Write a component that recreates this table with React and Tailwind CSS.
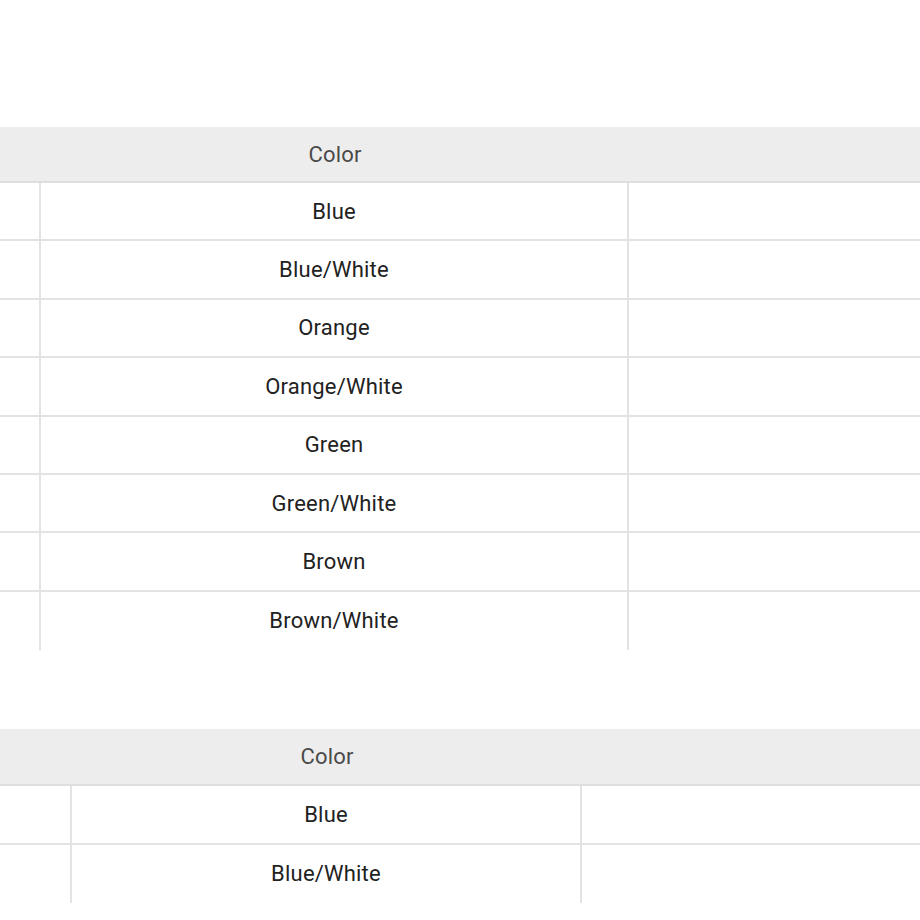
import React from 'react';

const tables = [
  {
    cols: 'grid-cols-[41px_588px_1fr]',
    rowH: 'h-[58.4px]',
    headH: 'h-[56px]',
    colors: ['Blue', 'Blue/White', 'Orange', 'Orange/White', 'Green', 'Green/White', 'Brown', 'Brown/White'],
  },
  {
    cols: 'grid-cols-[72px_510px_1fr]',
    rowH: 'h-[58.5px]',
    headH: 'h-[57px]',
    colors: ['Blue', 'Blue/White'],
  },
];

function ColorTable({ cols, rowH, headH, colors }) {
  return (
    <div className="w-full">
      <div className={`grid ${cols} ${headH} bg-[#ededed] border-b-2 border-[#dedede]`}>
        <div />
        <div className="flex items-center justify-center text-[22px] tracking-[0.2px] text-[#4a4a4a]">Color</div>
        <div />
      </div>
      {colors.map((c, i) => (
        <div
          key={c}
          className={`grid ${cols} ${rowH} ${i < colors.length - 1 ? 'border-b-2 border-[#e3e3e3]' : ''}`}
        >
          <div className="border-r-2 border-[#e3e3e3]" />
          <div className="flex items-center justify-center border-r-2 border-[#e3e3e3] text-[22px] tracking-[0.2px] text-[#222]">
            {c}
          </div>
          <div />
        </div>
      ))}
    </div>
  );
}

export default function App() {
  return (
    <div className="w-[920px] h-[920px] overflow-hidden bg-white pt-[127px] flex flex-col gap-[79px]" style={{ fontFamily: 'Roboto, "Liberation Sans", sans-serif' }}>
      {tables.map((t, i) => (
        <ColorTable key={i} {...t} />
      ))}
    </div>
  );
}
